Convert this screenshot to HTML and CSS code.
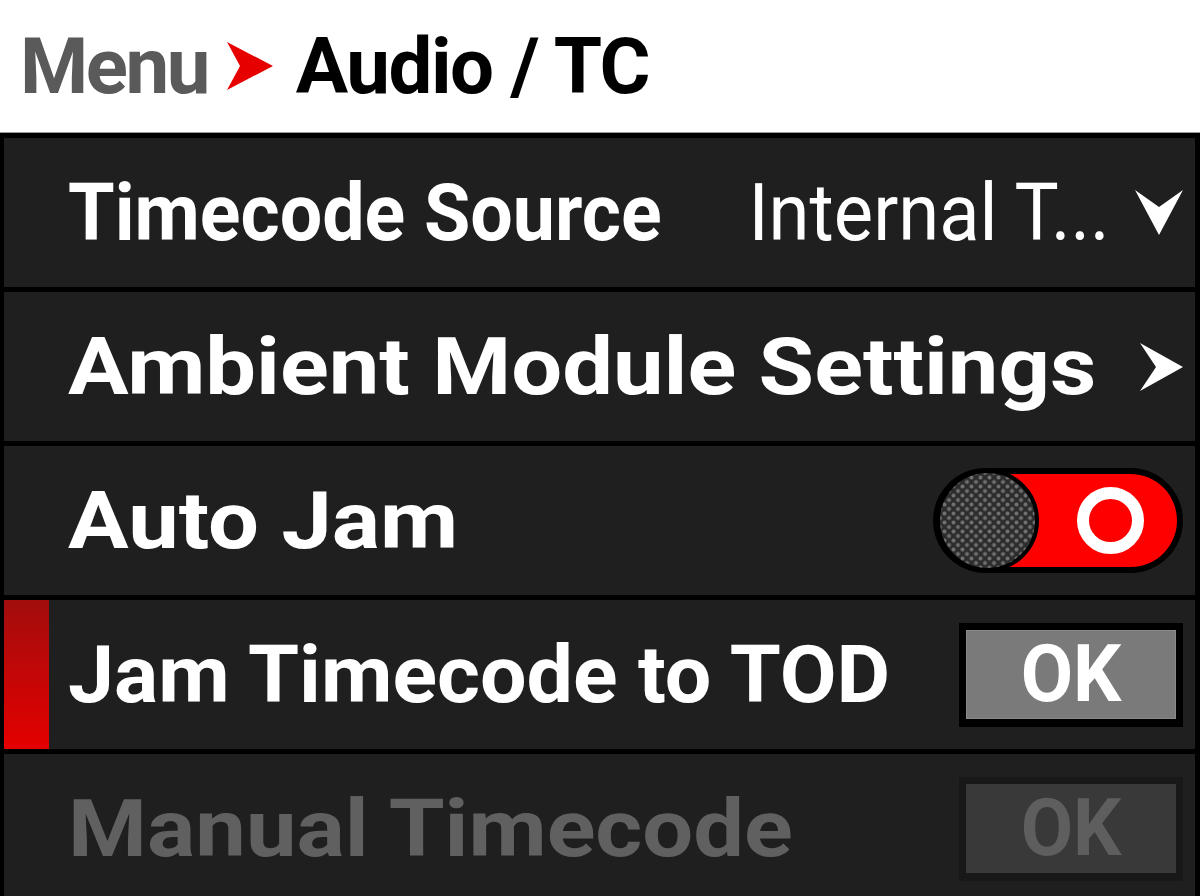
FILE: index.html
```html
<!DOCTYPE html>
<html lang="en">
<head>
    <meta charset="UTF-8">
    <meta name="viewport" content="width=device-width, initial-scale=1.0">
    <title>Audio / TC</title>
    <link rel="stylesheet" href="styles.css">
</head>
<body>
    <div class="screen">
        <div class="header">
            <span class="crumb">Menu</span>
            <svg class="crumb-arrow" viewBox="0 0 46 48" width="46" height="48"><path d="M0 0 L46 24 L0 48 L13 24 Z" fill="#e60000"/></svg>
            <span class="title">Audio / TC</span>
        </div>
        <div class="panel">
            <div class="row">
                <span class="label condensed">Timecode Source</span>
                <span class="value">Internal T...</span>
                <svg class="chevron-down" viewBox="0 0 48 45" width="48" height="45"><path d="M0 0 L24 17 L48 0 L24 45 Z" fill="#fff"/></svg>
            </div>
            <div class="row">
                <span class="label expanded">Ambient Module Settings</span>
                <svg class="chevron-right" viewBox="0 0 43 48" width="43" height="48"><path d="M0 0 L43 24 L0 48 L16 24 Z" fill="#fff"/></svg>
            </div>
            <div class="row">
                <span class="label expanded">Auto Jam</span>
                <div class="toggle">
                    <div class="knob"></div>
                    <div class="track"><div class="ring"></div></div>
                </div>
            </div>
            <div class="row active">
                <span class="label slight">Jam Timecode to TOD</span>
                <div class="ok-btn"><span>OK</span></div>
            </div>
            <div class="row disabled">
                <span class="label expanded">Manual Timecode</span>
                <div class="ok-btn"><span>OK</span></div>
            </div>
        </div>
    </div>
</body>
</html>
```
FILE: styles.css
```css
body {
    margin: 0;
    padding: 0;
    background-color: #000000;
    font-family: 'Roboto', 'Liberation Sans', sans-serif;
    overflow: hidden;
}

.screen {
    width: 1200px;
    height: 896px;
    overflow: hidden;
    background-color: #000000;
}

.header {
    height: 133px;
    background-color: #ffffff;
    border-bottom: 1px solid #9a9a9a;
    box-sizing: border-box;
    display: flex;
    align-items: center;
    padding-left: 20px;
    font-size: 78px;
    font-weight: 700;
}

.crumb {
    color: #5a5a5a;
    letter-spacing: -2.5px;
}

.crumb-arrow {
    margin: 0 23px 0 19px;
    flex: none;
}

.title {
    color: #000000;
    letter-spacing: -1.5px;
}

.panel {
    display: flex;
    flex-direction: column;
    gap: 5px;
    padding: 5px 5px 0 4px;
}

.row {
    height: 149px;
    flex: none;
    background-color: #1f1f1f;
    display: flex;
    align-items: center;
    padding: 0 12px 0 64px;
    position: relative;
    font-size: 80px;
    color: #ffffff;
}

.label {
    font-weight: 700;
    flex: 1;
    white-space: nowrap;
    transform-origin: left center;
}

.label.condensed {
    transform: scaleX(0.941);
}

.label.slight {
    transform: scaleX(1.031);
}

.label.expanded {
    transform: scaleX(1.128);
}

.value {
    font-weight: 400;
    margin-right: 25px;
    white-space: nowrap;
    transform: scaleX(0.927);
    transform-origin: right center;
}

.chevron-down, .chevron-right {
    flex: none;
}

.row.active::before {
    content: '';
    position: absolute;
    left: 0;
    top: 0;
    bottom: 0;
    width: 45px;
    background: linear-gradient(#a20d0d, #e40000);
}

.row.disabled .label {
    color: #606060;
}

/* toggle switch */
.toggle {
    width: 250px;
    height: 105px;
    box-sizing: border-box;
    background-color: #000000;
    border-radius: 53px;
    display: flex;
    align-items: center;
    padding: 0 6px 0 3px;
    flex: none;
}

.knob {
    width: 103px;
    height: 103px;
    box-sizing: border-box;
    border: 4px solid #000000;
    border-radius: 50%;
    flex: none;
    position: relative;
    z-index: 1;
    background-color: #2c2c2c;
    background-image:
        radial-gradient(circle, #707070 1.6px, transparent 2.4px),
        radial-gradient(circle, #707070 1.6px, transparent 2.4px);
    background-size: 9px 9px;
    background-position: 0 0, 4.5px 4.5px;
}

.track {
    flex: 1;
    height: 93px;
    margin-left: -52px;
    background-color: #ff0000;
    border-radius: 0 47px 47px 0;
    display: flex;
    align-items: center;
    justify-content: flex-end;
    padding-right: 33px;
}

.ring {
    width: 67px;
    height: 67px;
    box-sizing: border-box;
    border: 12px solid #ffffff;
    border-radius: 50%;
}

/* ok buttons */
.ok-btn {
    width: 224px;
    height: 104px;
    box-sizing: border-box;
    border: 7px solid #000000;
    border-bottom-width: 8px;
    background-color: #7a7a7a;
    display: flex;
    align-items: center;
    justify-content: center;
    font-weight: 700;
    color: #ffffff;
    flex: none;
    box-shadow: inset 0 0 0 1px #8a8a8a;
}

.ok-btn span {
    transform: scaleX(0.95);
}

.row.disabled .ok-btn {
    border-color: #181818;
    background-color: #393939;
    color: #5e5e5e;
    box-shadow: none;
}
```
